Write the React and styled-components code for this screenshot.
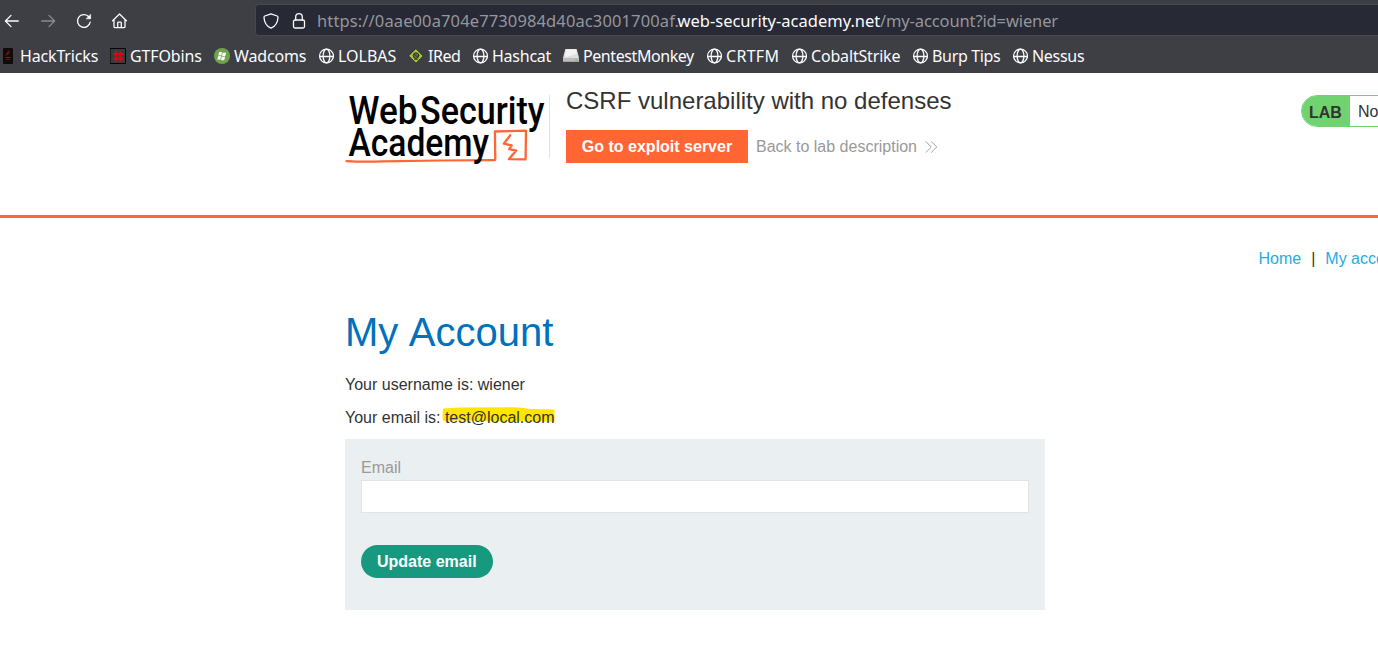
import React from 'react';
import styled, { createGlobalStyle } from 'styled-components';

const GlobalStyle = createGlobalStyle`
  * { box-sizing: border-box; }
  html, body { margin: 0; overflow: hidden; background: #fff; }
  body { font: 16px/20px "Liberation Sans", Arial, sans-serif; color: #333332; }
`;

const Window = styled.div`
  width: 1378px;
  height: 666px;
  overflow: hidden;
`;

const BrowserChrome = styled.header`
  height: 73px;
  background: #3e3f44;
  color: #fbfbfe;
  font-family: "Noto Sans", sans-serif;
  overflow: hidden;
`;

const Toolbar = styled.div`
  display: flex;
  align-items: center;
  height: 40px;
  padding-left: 4px;
`;

const NavButtons = styled.div`
  display: flex;
  gap: 20px;
  width: 252px;
  padding-top: 1px;
`;

const Glyph = styled.svg`
  display: block;
  flex: none;
  width: 16px;
  height: 16px;
  fill: none;
  stroke: ${(p) => (p.$dim ? '#8a8b8f' : '#fbfbfe')};
  stroke-width: 1.3;
  stroke-linecap: round;
  stroke-linejoin: round;
`;

const AddressBar = styled.div`
  display: flex;
  align-items: center;
  flex: 1;
  height: 32px;
  padding: 1px 0 0 6px;
  margin-left: -1px;
  background: #272935;
  border: 1px solid #47484d;
  border-right: 0;
  border-radius: 4px 0 0 4px;
`;

const SecurityIcons = styled.div`
  display: flex;
  gap: 12px;
  width: 54px;
  margin-left: 1px;
`;

const UrlPart = styled.span`
  flex: none;
  width: ${(p) => p.$width}px;
  font-size: 16.5px;
  line-height: 24px;
  white-space: nowrap;
  letter-spacing: ${(p) => p.$spacing || 0}px;
  color: ${(p) => (p.$strong ? '#fbfbfe' : '#95969c')};
`;

const Bookmarks = styled.nav`
  display: flex;
  gap: 12px;
  height: 32px;
  align-items: center;
`;

const Bookmark = styled.a`
  display: flex;
  align-items: center;
  gap: 4px;
`;

const BookmarkLabel = styled.span`
  flex: none;
  width: ${(p) => p.$width}px;
  font-size: 16px;
  line-height: 24px;
  white-space: nowrap;
  letter-spacing: ${(p) => p.$spacing || 0}px;
`;

const LabHeader = styled.section`
  display: flex;
  align-items: flex-start;
  height: 145px;
  padding: 14px 0 0 345px;
  border-bottom: 3px solid #ff6633;
`;

const LogoBox = styled.div`
  flex: none;
  width: 205px;
  height: 63px;
  margin-top: 8px;
  border-right: 1px solid #e2e2e2;
`;

const LogoArt = styled.svg`
  display: block;
  overflow: visible;
  font-family: Roboto, sans-serif;
  font-weight: 500;
`;

const LabInfo = styled.div`
  flex: none;
  width: 751px;
  padding-left: 16px;
`;

const LabTitle = styled.h2`
  margin: 0;
  font-size: 24px;
  font-weight: 400;
  line-height: 28px;
`;

const LabActions = styled.div`
  display: flex;
  align-items: center;
  gap: 8px;
  margin-top: 15px;
`;

const ExploitButton = styled.button`
  width: 182px;
  height: 33px;
  padding: 0;
  border: 0;
  background: #ff6633;
  color: #fff;
  font: bold 16px/33px "Liberation Sans", Arial, sans-serif;
`;

const BackLink = styled.a`
  display: flex;
  align-items: center;
  gap: 8.5px;
  color: #999;
`;

const Status = styled.div`
  display: flex;
  flex: none;
  width: 160px;
  height: 32px;
  margin-top: 8px;
  border: 1px solid #70d36f;
  border-radius: 16px;
  overflow: hidden;
  line-height: 34px;
  white-space: nowrap;
`;

const StatusTag = styled.span`
  width: 48px;
  padding-left: 7px;
  background: #70d36f;
  font-weight: bold;
`;

const StatusText = styled.span`
  padding-left: 8px;
  line-height: 31px;
`;

const Account = styled.main`
  padding: 31px 0 0 345px;
`;

const PageNav = styled.nav`
  display: flex;
  gap: 10px;
  padding-left: 913.5px;
  white-space: nowrap;
`;

const PageLink = styled.a`
  color: #29abe2;
`;

const Heading = styled.h1`
  margin: 40px 0 0;
  font-size: 40px;
  font-weight: 400;
  line-height: 46px;
  word-spacing: 1.6px;
  color: #0071bc;
`;

const Detail = styled.p`
  margin: ${(p) => p.$top}px 0 0;
`;

const Marked = styled.span`
  position: relative;
  isolation: isolate;
`;

const MarkerStroke = styled.svg`
  position: absolute;
  z-index: -1;
  left: -2.5px;
  top: -2px;
`;

const EmailForm = styled.form`
  width: 700px;
  height: 171px;
  margin-top: 11px;
  padding: 19px 16px 0;
  background: #eaeff2;
`;

const FieldLabel = styled.label`
  display: block;
  height: 22px;
  color: #999;
`;

const Field = styled.input`
  display: block;
  width: 100%;
  height: 33px;
  border: 1px solid #e1e3e5;
  background: #fff;
`;

const SubmitButton = styled.button`
  height: 33px;
  margin-top: 32px;
  padding: 0 16px;
  border: 0;
  border-radius: 17px;
  background: #17997f;
  color: #fff;
  font: bold 16px/33px "Liberation Sans", Arial, sans-serif;
`;

const icons = {
  hacktricks: (
    <Glyph viewBox="0 0 16 16">
      <rect x="3" y="0" width="10" height="16" rx="1" fill="#100c0c" stroke="none" />
      <path d="M7 5.5 9 3M6 7l3-2" stroke="#a3151d" strokeWidth="1" />
      <path d="M6 9.5h4" stroke="#63421c" strokeWidth="0.8" />
      <path d="M6.500 11.500h3" stroke="#7d1218" strokeWidth="0.8" />
    </Glyph>
  ),
  gtfobins: (
    <Glyph viewBox="0 0 16 16">
      <rect x="0.5" y="0.5" width="15" height="15" fill="#393a3e" stroke="#060606" strokeWidth="1" />
      <path d="M6 3v10.500M10.500 3v10.500M3 6h10.500M3 10.500h10.500" stroke="#d40b12" strokeWidth="1.9" strokeLinecap="butt" />
    </Glyph>
  ),
  wadcoms: (
    <Glyph viewBox="0 0 16 16">
      <circle cx="8" cy="8" r="8" fill="#6ea34b" stroke="none" />
      <path
        d="M5.1 4.2q1.700-.7 3 0l-.8 3.400q-1.4-.6-3 0zM8.800 4.500q1.600.6 3.300 0l-.8 3.400q-1.600.6-3.300 0zM4.100 8.300q1.600-.6 3 0l-.8 3.400q-1.5-.6-3 0zM7.800 8.600q1.600.6 3.300 0l-.8 3.400q-1.600.6-3.300 0z"
        fill="#fff"
        stroke="none"
      />
    </Glyph>
  ),
  globe: (
    <Glyph viewBox="0 0 16 16">
      <circle cx="8.5" cy="8" r="6.9" />
      <ellipse cx="8.5" cy="8" rx="3.4" ry="6.9" />
      <path d="M1.700 8.500h13.600" />
    </Glyph>
  ),
  ired: (
    <Glyph viewBox="0 0 16 16">
      <path d="M8 .8 15.200 8 8 15.200.8 8z" fill="#a9bf4b" stroke="#292d20" strokeWidth="0.8" />
      <circle cx="8" cy="7.6" r="2.8" fill="#657334" stroke="#2c311c" strokeWidth="1" />
      <path d="m6.4 6.6 3.2 2.2M6.4 11.300h3.4" stroke="#2c311c" strokeWidth="0.8" />
    </Glyph>
  ),
  drive: (
    <Glyph viewBox="0 0 16 16">
      <path d="M2.3 1h11.4L16 10v3.5H0V10z" fill="#dededf" stroke="none" />
      <path d="M3 1.5h10l.7 4-10 3.5-1.8-1z" fill="#f3f3f3" stroke="none" />
      <path d="M0 10h16v3.5H0z" fill="#bcbdbc" stroke="none" />
      <path d="M12.8 12h1" stroke="#69a85c" strokeWidth="1" />
    </Glyph>
  ),
};

const bookmarks = [
  { label: 'HackTricks', icon: 'hacktricks', width: 78, spacing: -0.16 },
  { label: 'GTFObins', icon: 'gtfobins', width: 72, spacing: -0.12 },
  { label: 'Wadcoms', icon: 'wadcoms', width: 72, spacing: -0.16 },
  { label: 'LOLBAS', icon: 'globe', width: 58 },
  { label: 'IRed', icon: 'ired', width: 32, spacing: -0.5 },
  { label: 'Hashcat', icon: 'globe', width: 59, spacing: -0.25 },
  { label: 'PentestMonkey', icon: 'drive', width: 111, spacing: -0.42 },
  { label: 'CRTFM', icon: 'globe', width: 53, spacing: 0.3 },
  { label: 'CobaltStrike', icon: 'globe', width: 89, spacing: -0.17 },
  { label: 'Burp Tips', icon: 'globe', width: 68, spacing: -0.33 },
  { label: 'Nessus', icon: 'globe', width: 52, spacing: -0.3 },
];

const BackIcon = () => (
  <Glyph viewBox="0 0 16 16"><path d="M14.3 8H1.6M7 2.4 1.4 8 7 13.6" /></Glyph>
);
const ForwardIcon = () => (
  <Glyph viewBox="0 0 16 16" $dim><path d="M1.7 8h12.7M9 2.4 14.6 8 9 13.6" /></Glyph>
);
const ReloadIcon = () => (
  <Glyph viewBox="0 0 16 16">
    <path d="M14.2 9.200A6.4 6.4 0 1 1 12.2 3.2L14 5" />
    <path d="M14.6 1.6v4.2h-4.2z" fill="#fbfbfe" strokeWidth="0.6" />
  </Glyph>
);
const HomeIcon = () => (
  <Glyph viewBox="0 0 16 16">
    <path d="M.6 7.8 7.500 1l6.900 6.8M2 6.6v7.2q0 .8.8.8h9.400q.8 0 .8-.8V6.6M5.700 14.4V10q0-.8.8-.8h2q.8 0 .8.8v4.4" />
  </Glyph>
);
const ShieldIcon = () => (
  <Glyph viewBox="0 0 16 16">
    <path d="M8 .8 14.2 3q.8.3.8 1.2C14.8 9.2 12.5 13.2 8 15.2 3.5 13.2 1.2 9.2 1 4.2Q1 3.3 1.8 3z" />
  </Glyph>
);
const LockIcon = () => (
  <Glyph viewBox="0 0 16 16">
    <rect x="2.5" y="7" width="11" height="8" rx="1.5" />
    <path d="M4.7 7V4a3.3 3.3 0 0 1 6.6 0v3" />
  </Glyph>
);

const AcademyLogo = () => (
  <LogoArt width="204" height="72" viewBox="345 95 204 72">
    <g fill="#000">
      <text x="348.5" y="124" fontSize="38.5" textLength="69" lengthAdjust="spacingAndGlyphs">Web</text>
      <text x="420" y="124" fontSize="38.5" textLength="124.5" lengthAdjust="spacingAndGlyphs">Security</text>
    </g>
    <g fill="none" stroke="#ff6633" strokeLinejoin="round" strokeLinecap="round">
      <path d="M346.5 161.2q18 .9 36 .2l58-.9 54-.3" strokeWidth="2.2" />
      <path d="M495.3 159.8 494.9 131.5 526 130.7 525.6 159.3 508.8 159.2 516.3 150.6 509.2 149.2 511.7 145.4 503.8 143.7 510.3 135.3" strokeWidth="2.3" />
    </g>
    <text x="348.5" y="156.3" fontSize="38" fill="#000" textLength="140.500" lengthAdjust="spacingAndGlyphs">Academy</text>
  </LogoArt>
);

export default function App() {
  return (
    <Window>
      <GlobalStyle />
      <BrowserChrome>
        <Toolbar>
          <NavButtons>
            <BackIcon />
            <ForwardIcon />
            <ReloadIcon />
            <HomeIcon />
          </NavButtons>
          <AddressBar>
            <SecurityIcons>
              <ShieldIcon />
              <LockIcon />
            </SecurityIcons>
            <UrlPart $width={360.5} $spacing={0.12}>https://0aae00a704e7730984d40ac3001700af.</UrlPart>
            <UrlPart $width={202.5} $strong>web-security-academy.net</UrlPart>
            <UrlPart $width={180} $spacing={-0.12}>/my-account?id=wiener</UrlPart>
          </AddressBar>
        </Toolbar>
        <Bookmarks>
          {bookmarks.map((b) => (
            <Bookmark key={b.label}>
              {icons[b.icon]}
              <BookmarkLabel $width={b.width} $spacing={b.spacing}>{b.label}</BookmarkLabel>
            </Bookmark>
          ))}
        </Bookmarks>
      </BrowserChrome>
      <LabHeader>
        <LogoBox><AcademyLogo /></LogoBox>
        <LabInfo>
          <LabTitle>CSRF vulnerability with no defenses</LabTitle>
          <LabActions>
            <ExploitButton>Go to exploit server</ExploitButton>
            <BackLink>
              Back to lab description
              <svg width="13" height="12" viewBox="0 0 13 12" fill="none" stroke="#999" strokeWidth="0.9">
                <path d="m.7.4 5.6 5.6-5.6 5.6M6.2.4l5.6 5.6-5.6 5.6" />
              </svg>
            </BackLink>
          </LabActions>
        </LabInfo>
        <Status>
          <StatusTag>LAB</StatusTag>
          <StatusText>Not solved</StatusText>
        </Status>
      </LabHeader>
      <Account>
        <PageNav>
          <PageLink>Home</PageLink>
          <span>|</span>
          <PageLink>My account</PageLink>
        </PageNav>
        <Heading>My Account</Heading>
        <Detail $top={20}>Your username is: wiener</Detail>
        <Detail $top={13}>
          Your email is:{' '}
          <Marked>
            <MarkerStroke width="113" height="17" viewBox="0 0 113 17">
              <path d="M1 1.5 18 .4 72 .2Q80 .4 88 2L112.500 2.6V14.8L98 14.5 70 14.3 15 13.5 2 14Q.5 14 .5 11z" fill="#ffe500" />
            </MarkerStroke>
            test@local.com
          </Marked>
        </Detail>
        <EmailForm>
          <FieldLabel>Email</FieldLabel>
          <Field />
          <SubmitButton type="button">Update email</SubmitButton>
        </EmailForm>
      </Account>
    </Window>
  );
}
